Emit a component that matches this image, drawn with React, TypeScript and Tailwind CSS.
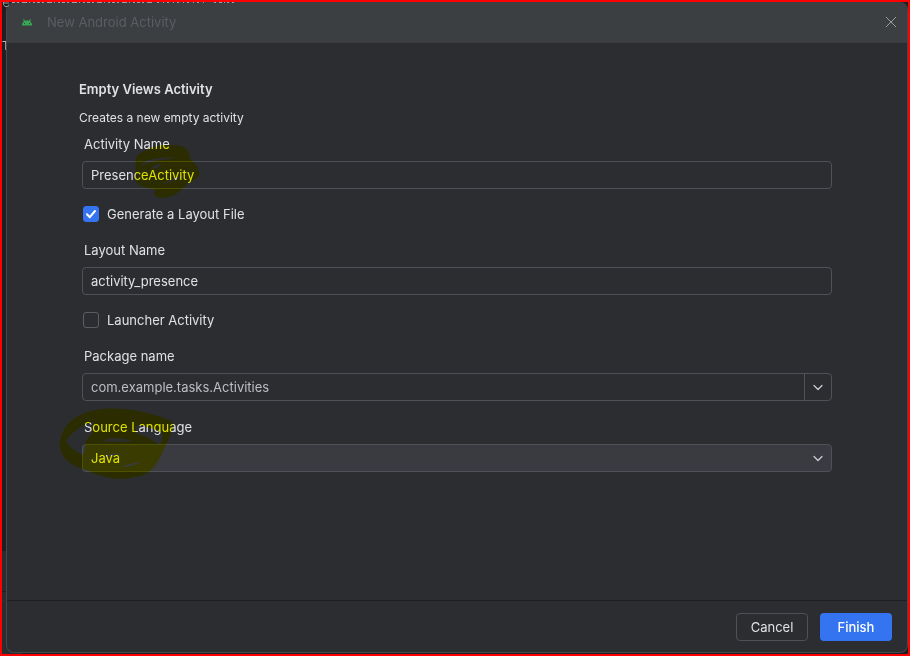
import React, { useState } from 'react';

const inputClass =
  'mt-[7px] h-7 w-full rounded border border-[#4e5157] bg-transparent px-2 text-[13px] outline-none';

const Chevron = () => (
  <svg viewBox="0 0 12 12" className="pointer-events-none h-3 w-3" fill="none" stroke="#ced0d6" strokeWidth="1.2" strokeLinecap="round" strokeLinejoin="round">
    <path d="M2 4.5L6 8.500L10 4.5" />
  </svg>
);

interface CheckRowProps {
  id: string;
  label: string;
  checked: boolean;
  onChange: (value: boolean) => void;
}

const CheckRow: React.FC<CheckRowProps> = ({ id, label, checked, onChange }) => (
  <div className="mt-[15px] flex h-5 items-center gap-2 pl-px">
    <span className="relative flex h-4 w-4">
      <input
        id={id}
        type="checkbox"
        checked={checked}
        onChange={(e) => onChange(e.target.checked)}
        className="h-4 w-4 appearance-none rounded-[3px] border border-[#5a5d63] checked:border-[#3574f0] checked:bg-[#3574f0]"
      />
      {checked && (
        <svg viewBox="0 0 16 16" className="pointer-events-none absolute inset-0 h-4 w-4" fill="none" stroke="#fff" strokeWidth="2" strokeLinecap="round" strokeLinejoin="round">
          <path d="M4 8.3L6.8 11.2L12 5" />
        </svg>
      )}
    </span>
    <label htmlFor={id}>{label}</label>
  </div>
);

export default function App() {
  const [activityName, setActivityName] = useState('PresenceActivity');
  const [layoutName, setLayoutName] = useState('activity_presence');
  const [packageName, setPackageName] = useState('com.example.tasks.Activities');
  const [generateLayout, setGenerateLayout] = useState(true);
  const [launcher, setLauncher] = useState(false);

  return (
    <div className="relative flex min-h-screen overflow-hidden border-2 border-[#ff0000] bg-[#1e1f22] pb-px pl-1 font-['Inter',sans-serif] text-[13px] leading-5 text-[#dfe1e5]">
      <div className="absolute bottom-0 left-0 h-[103px] w-5 bg-[#2b2d30]">
        <div className="mt-10 h-px bg-[#1e1f22]" />
      </div>
      <span className="absolute top-[35px] left-0 font-['Liberation_Mono',monospace] text-[#bcbec4]">T</span>

      <div className="relative flex flex-1 flex-col overflow-hidden rounded-lg border border-t-0 border-[#46484b] bg-[#2b2d30]">
        <header className="flex h-[41px] items-center border-b border-[#393b3e] bg-[#3c3f41] pr-[11px] pl-[15px]">
          <svg viewBox="0 0 10 7" className="h-[7px] w-[10px]" fill="#36a853">
            <path d="M0 6.500C0 4.600 .8 3.200 2 2.300L1 .5L1.800 0L3 1.800C4.200 1.400 5.800 1.400 7 1.800L8.200 0L9 .5L8 2.300C9.200 3.200 10 4.600 10 6.500Z" />
            <rect x="2" y="4" width="1" height="1" fill="#3c3f41" />
            <rect x="7" y="4" width="1" height="1" fill="#3c3f41" />
          </svg>
          <h1 className="ml-[15px] flex-1 text-[#5a5d63]">New Android Activity</h1>
          <button type="button" aria-label="Close" className="text-[#9a9c9f]">
            <svg viewBox="0 0 10 10" className="h-[10px] w-[10px]" stroke="currentColor">
              <path d="M0 0L10 10M10 0L0 10" />
            </svg>
          </button>
        </header>

        <main className="flex-1 pt-9 pr-[75px] pl-[72px]">
          <h2 className="font-semibold">Empty Views Activity</h2>
          <p className="mt-[9px] text-[12px]">Creates a new empty activity</p>

          <form className="pl-[3px]">
            <div className="relative mt-[6px]">
              <label htmlFor="activity" className="block pl-[2px]">Activity Name</label>
              <input id="activity" value={activityName} onChange={(e) => setActivityName(e.target.value)} className={inputClass} />
              {/* marker stroke over the suffix of the name */}
              <svg viewBox="0 0 68 56" className="pointer-events-none absolute top-2 left-[52px] h-14 w-[68px] mix-blend-multiply" fill="#ffff00">
                <path fillRule="evenodd" d="M3 14C12 6 26 2 40 3C51 4 56 7 56 17C61 21 66 26 65 33C63 39 55 39 51 44C45 51 37 56 27 56C20 55 19 51 22 47C11 47 2 43 1 36C3 29 0 19 3 14ZM6 25C14 19 27 18 42 16C34 15 22 16 15 18C10 20 7 22 6 25ZM17 27C22 24 20 30 28 22C23 22 18 24 17 27ZM29 42C38 40 44 36 50 34C42 35 33 39 29 42Z" />
              </svg>
            </div>

            <CheckRow id="layout-file" label="Generate a Layout File" checked={generateLayout} onChange={setGenerateLayout} />

            <div className="mt-4">
              <label htmlFor="layout" className="block pl-[2px]">Layout Name</label>
              <input id="layout" value={layoutName} onChange={(e) => setLayoutName(e.target.value)} className={inputClass} />
            </div>

            <CheckRow id="launcher" label="Launcher Activity" checked={launcher} onChange={setLauncher} />

            <div className="mt-4">
              <label htmlFor="package" className="block pl-[2px]">Package name</label>
              <div className="mt-[7px] flex h-7 rounded border border-[#4e5157]">
                <input id="package" value={packageName} onChange={(e) => setPackageName(e.target.value)} className="min-w-0 flex-1 bg-transparent px-2 text-[#bcbec4] outline-none" />
                <button type="button" aria-label="Show packages" className="flex w-[27px] items-center justify-center border-l border-[#4e5157]">
                  <Chevron />
                </button>
              </div>
            </div>

            <div className="relative mt-4">
              <label htmlFor="language" className="block pl-[2px]">Source Language</label>
              <div className="relative mt-[7px]">
                <select id="language" defaultValue="Java" className="h-7 w-full appearance-none rounded border border-[#4e5157] bg-[#393b40] px-2 outline-none">
                  <option>Java</option>
                  <option>Kotlin</option>
                </select>
                <span className="pointer-events-none absolute inset-y-0 right-2 flex items-center">
                  <Chevron />
                </span>
              </div>
              {/* marker loop round the language */}
              <svg viewBox="0 0 116 74" className="pointer-events-none absolute -top-[10px] -left-[23px] h-[74px] w-[116px] mix-blend-multiply" fill="#ffff00">
                <path fillRule="evenodd" d="M1 36C2 18 18 6 37 3C59-1 87 4 113 14C117 19 109 33 104 44C97 60 90 69 75 70C58 75 39 69 28 63C12 59 0 51 1 36ZM7 34C11 41 17 45 24 48L26 42C27 37 25 35 31 29C33 25 35 20 34 15C21 18 12 26 7 34ZM78 27C88 29 94 34 101 38C103 34 104 30 103 26C96 22 87 19 78 18C76 21 76 24 78 27ZM43 34C51 30 62 31 74 34C64 35 53 35 43 34ZM43 50C49 47 55 47 64 46C57 48 50 49 43 50ZM63 60C68 57 75 56 82 55C76 58 69 60 63 60Z" />
              </svg>
            </div>
          </form>
        </main>

        <footer className="flex h-13 items-center justify-end gap-3 border-t border-[#1e1f22] px-[15px]">
          <button type="button" className="h-7 w-18 rounded border border-[#4e5157]">Cancel</button>
          <button type="button" className="h-7 w-18 rounded bg-[#3574f0] font-medium text-white">Finish</button>
        </footer>
      </div>

      {/* sliver of the editor line that shows above the dialog */}
      <svg viewBox="0 0 232 6" className="pointer-events-none absolute top-0 left-0 h-[6px] w-[232px]" fill="none" stroke="#9da0a6" aria-hidden="true">
        <path d="M1.500 0V2.500L3 4.5H5.500L7 3.500M1.500 1H7" />
        <path d="M10 .5H150" strokeDasharray="3 2 2 3 5 2 1 3 2 2" />
        <path d="M155 .5H202" strokeDasharray="2 4 1 3" />
        <path d="M212 .5H232" strokeDasharray="2 3 3 2 1 2" />
      </svg>
    </div>
  );
}
